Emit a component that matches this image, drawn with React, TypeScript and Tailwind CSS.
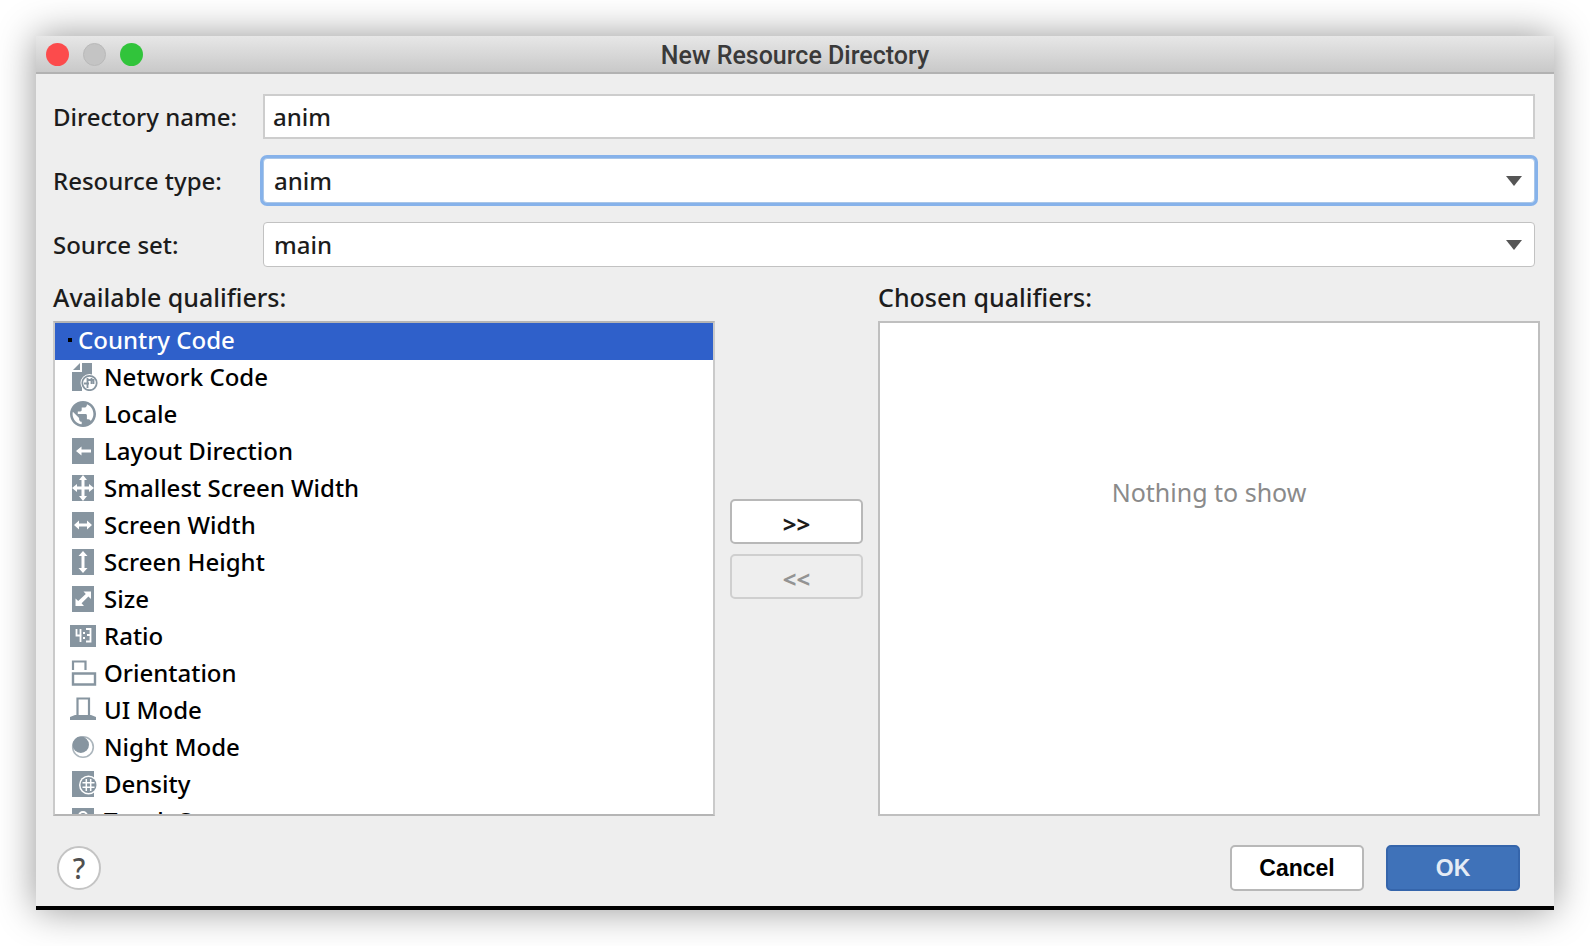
import { useState } from "react";
import type { ReactNode, SelectHTMLAttributes } from "react";

const tile = <path d="M2 1h22v26H2z" fill="currentColor" />;

const icons: Record<string, ReactNode> = {
  network: (
    <>
      <path d="M12 0h10v12h-3a8 8 0 0 0-7 8v8H2V9h10z" fill="currentColor" />
      <path d="M3 7l7-7v7z" fill="currentColor" />
      <circle cx="19.5" cy="20" r="9" fill="#fff" />
      <circle cx="19.5" cy="20" r="7.200" fill="#fff" stroke="currentColor" strokeWidth="1.800" />
      <path
        d="M17.500 15v10M21.500 15v6M14 20.500h5M17 17h6.500v4"
        stroke="currentColor"
        strokeWidth="1.800"
        fill="none"
      />
    </>
  ),
  locale: (
    <path
      transform="translate(-2.6 -1.6) scale(1.3)"
      fill="currentColor"
      d="M12 2C6.48 2 2 6.48 2 12s4.48 10 10 10 10-4.48 10-10S17.52 2 12 2zm-1 17.93c-3.95-.49-7-3.85-7-7.93 0-.62.08-1.21.21-1.79L9 15v1c0 1.1.9 2 2 2v1.93zm6.9-2.54c-.26-.81-1-1.39-1.9-1.39h-1v-3c0-.55-.45-1-1-1H8v-2h2c.55 0 1-.45 1-1V7h2c1.1 0 2-.9 2-2v-.41c2.93 1.19 5 4.06 5 7.41 0 2.08-.8 3.97-2.1 5.39z"
    />
  ),
  direction: (
    <>
      {tile}
      <path d="M6 14l5.500-4.500v3H21v3h-9.500v3z" fill="#fff" />
    </>
  ),
  smallest: (
    <>
      {tile}
      <path
        d="M13 1l4 5h-2.500v6.500H19V10l5 4-5 4v-2.500h-4.500V22H17l-4 5-4-5h2.500v-6.500H7V18l-5-4 5-4v2.500h4.500V6H9z"
        fill="#fff"
      />
    </>
  ),
  width: (
    <>
      {tile}
      <path d="M4 14l5-4.500v3h8v-3l5 4.500-5 4.500v-3H9v3z" fill="#fff" />
    </>
  ),
  height: (
    <>
      {tile}
      <path d="M13 3l4.500 5h-3v12h3L13 25l-4.500-5h3V8h-3z" fill="#fff" />
    </>
  ),
  size: (
    <>
      {tile}
      <path d="M13.500 6.500H21V14l-2.600-2.600-6.800 6.800 2.400 2.800H5.500v-7.500l2.700 2.500L15.800 9z" fill="#fff" />
    </>
  ),
  ratio: (
    <>
      <path d="M0 3h26v22H0z" fill="currentColor" />
      <path
        d="M6.500 7v6.500h5M10.500 7v13M16 7h4.500v12.500H16M17 13h3.500"
        fill="none"
        stroke="#fff"
        strokeWidth="1.800"
      />
      <path d="M13 10h2v2h-2zM13 15h2v2h-2z" fill="#fff" />
    </>
  ),
  orientation: (
    <g fill="none" stroke="currentColor">
      <path d="M3 11V2.500h12.500V11" strokeWidth="2.200" />
      <path d="M3 14.500h22v11H3z" strokeWidth="2.400" />
    </g>
  ),
  ui: (
    <>
      <path d="M7.500 20V2.500H19V20" fill="none" stroke="currentColor" strokeWidth="2.200" />
      <path d="M5 19h16l5 2v3H0v-3z" fill="currentColor" />
    </>
  ),
  night: (
    <>
      <circle cx="13" cy="14" r="10.300" fill="#fff" stroke="currentColor" strokeOpacity=".7" strokeWidth="1.600" />
      <circle cx="10.800" cy="11.800" r="8.200" fill="currentColor" />
    </>
  ),
  density: (
    <>
      {tile}
      <circle cx="18.500" cy="15" r="9.500" fill="#fff" />
      <circle cx="18.500" cy="15" r="8" fill="currentColor" />
      <path
        d="M16.300 9v12M20.700 9v12M12.500 12.800h12M12.500 17.200h12"
        fill="none"
        stroke="#fff"
        strokeWidth="1.500"
      />
    </>
  ),
  touch: (
    <>
      {tile}
      <circle cx="13" cy="9" r="4" fill="none" stroke="#fff" strokeWidth="2" />
      <path d="M12 9h2v14h-2z" fill="#fff" />
    </>
  ),
};

const qualifiers = [
  { name: "Country Code", icon: "" },
  { name: "Network Code", icon: "network" },
  { name: "Locale", icon: "locale" },
  { name: "Layout Direction", icon: "direction" },
  { name: "Smallest Screen Width", icon: "smallest" },
  { name: "Screen Width", icon: "width" },
  { name: "Screen Height", icon: "height" },
  { name: "Size", icon: "size" },
  { name: "Ratio", icon: "ratio" },
  { name: "Orientation", icon: "orientation" },
  { name: "UI Mode", icon: "ui" },
  { name: "Night Mode", icon: "night" },
  { name: "Density", icon: "density" },
  { name: "Touch Screen", icon: "touch" },
];

function Dropdown({ className, children, ...rest }: SelectHTMLAttributes<HTMLSelectElement>) {
  return (
    <div className="relative">
      <select
        {...rest}
        className={
          "block h-[45px] w-full appearance-none rounded-[4px] border bg-white pl-[10px] pr-10 outline-none " + className
        }
      >
        {children}
      </select>
      <svg
        className="pointer-events-none absolute right-[13px] top-[18px] text-[#555]"
        width="16"
        height="10"
        viewBox="0 0 16 10"
        aria-hidden="true"
      >
        <path d="M0 0h16L8 10z" fill="currentColor" />
      </svg>
    </div>
  );
}

export default function App() {
  const [selected, setSelected] = useState("Country Code");

  return (
    <div className="min-h-screen bg-white p-9 font-['Noto_Sans',sans-serif] text-[24px] leading-8 font-medium text-[#1c1c1c]">
      <main className="border-b-4 border-black bg-[#eee] shadow-[0_0_36px_rgba(0,0,0,0.42)]">
        <header className="grid h-[38px] grid-cols-[1fr_auto_1fr] items-center border-b-2 border-[#b2b2b2] bg-linear-to-b from-[#e7e7e7] to-[#c9c9c9] px-[10px]">
          <div className="flex gap-[14px]">
            <button type="button" aria-label="Close" className="size-[23px] rounded-full bg-[#fc4b4c]" />
            <button
              type="button"
              aria-label="Minimize"
              disabled
              className="size-[23px] rounded-full border border-[#b9b9b9] bg-[#c4c4c4]"
            />
            <button type="button" aria-label="Zoom" className="size-[23px] rounded-full bg-[#31c43b]" />
          </div>
          <h1 className="pt-1 font-['Roboto',sans-serif] text-[25px] font-medium text-[#3a3a3a]">
            New Resource Directory
          </h1>
        </header>

        <form className="pt-5 pr-[14px] pb-[15px] pl-[17px]" onSubmit={(e) => e.preventDefault()}>
          <div className="mr-[5px] grid grid-cols-[210px_1fr] items-center gap-y-[19px]">
            <label htmlFor="name">Directory name:</label>
            <input
              id="name"
              type="text"
              defaultValue="anim"
              className="h-[45px] w-full border-2 border-[#cdcdcd] bg-white px-2 outline-none"
            />
            <label htmlFor="type">Resource type:</label>
            <Dropdown id="type" defaultValue="anim" className="border-[#a9c6e8] ring-3 ring-[#86b2ea]">
              <option>anim</option>
              <option>layout</option>
            </Dropdown>
            <label htmlFor="source">Source set:</label>
            <Dropdown id="source" defaultValue="main" className="border-[#c2c2c2]">
              <option>main</option>
              <option>debug</option>
            </Dropdown>
          </div>

          <div className="mt-[14px] grid grid-cols-[1fr_163px_1fr]">
            <section className="flex flex-col">
              <h2 id="available" className="mb-2 text-[25px]">
                Available qualifiers:
              </h2>
              <ul
                role="listbox"
                aria-labelledby="available"
                className="h-[495px] overflow-hidden border-2 border-t-[#b5b5b5] border-r-[#cacaca] border-b-[#b5b5b5] border-l-[#cacaca] bg-white text-black"
              >
                {qualifiers.map(({ name, icon }) => (
                  <li
                    key={name}
                    role="option"
                    aria-selected={name === selected}
                    onClick={() => setSelected(name)}
                    className={
                      "flex h-[37px] items-center gap-[6px] pb-[3px] " +
                      (icon ? "pl-[15px] " : "pl-[13px] ") +
                      (name === selected ? "bg-[#2f60ca] text-white" : "")
                    }
                  >
                    {icon ? (
                      <svg
                        width="28"
                        height="28"
                        viewBox="0 0 28 28"
                        className="shrink-0 text-[#8795a0]"
                        aria-hidden="true"
                      >
                        {icons[icon]}
                      </svg>
                    ) : (
                      <span className="size-1 bg-black" />
                    )}
                    {name}
                  </li>
                ))}
              </ul>
            </section>

            <div className="flex flex-col gap-[10px] px-[15px] pt-[218px]">
              <button
                type="button"
                aria-label="Add qualifier"
                className="h-[45px] rounded-[5px] border-2 border-[#b8b8b8] bg-white pt-1 font-bold text-[#1c1c1c]"
              >
                &gt;&gt;
              </button>
              <button
                type="button"
                aria-label="Remove qualifier"
                disabled
                className="h-[45px] rounded-[5px] border-2 border-[#cfcfcf] pt-1 font-bold text-[#939393]"
              >
                &lt;&lt;
              </button>
            </div>

            <section className="flex flex-col">
              <h2 id="chosen" className="mb-2 text-[25px]">
                Chosen qualifiers:
              </h2>
              <div
                aria-labelledby="chosen"
                className="h-[495px] border-2 border-[#bfbfbf] bg-white pt-[153px] text-center text-[25px] font-normal text-[#8a8a8a]"
              >
                Nothing to show
              </div>
            </section>
          </div>

          <footer className="mt-[29px] flex items-center gap-[22px] pr-5 pl-1 font-['Liberation_Sans',Arial,sans-serif] text-[23px] font-bold">
            <button
              type="button"
              aria-label="Help"
              className="mr-auto size-11 rounded-full border-2 border-[#c4c4c4] bg-white font-['Noto_Sans',sans-serif] text-[28px] font-medium text-[#505050]"
            >
              ?
            </button>
            <button type="button" className="h-[46px] w-[134px] rounded-[5px] border-2 border-[#b8b8b8] bg-white text-black">
              Cancel
            </button>
            <button
              type="submit"
              className="h-[46px] w-[134px] rounded-[5px] border-2 border-[#3565ab] bg-[#3f72b9] text-[#e4ebf5]"
            >
              OK
            </button>
          </footer>
        </form>
      </main>
    </div>
  );
}
